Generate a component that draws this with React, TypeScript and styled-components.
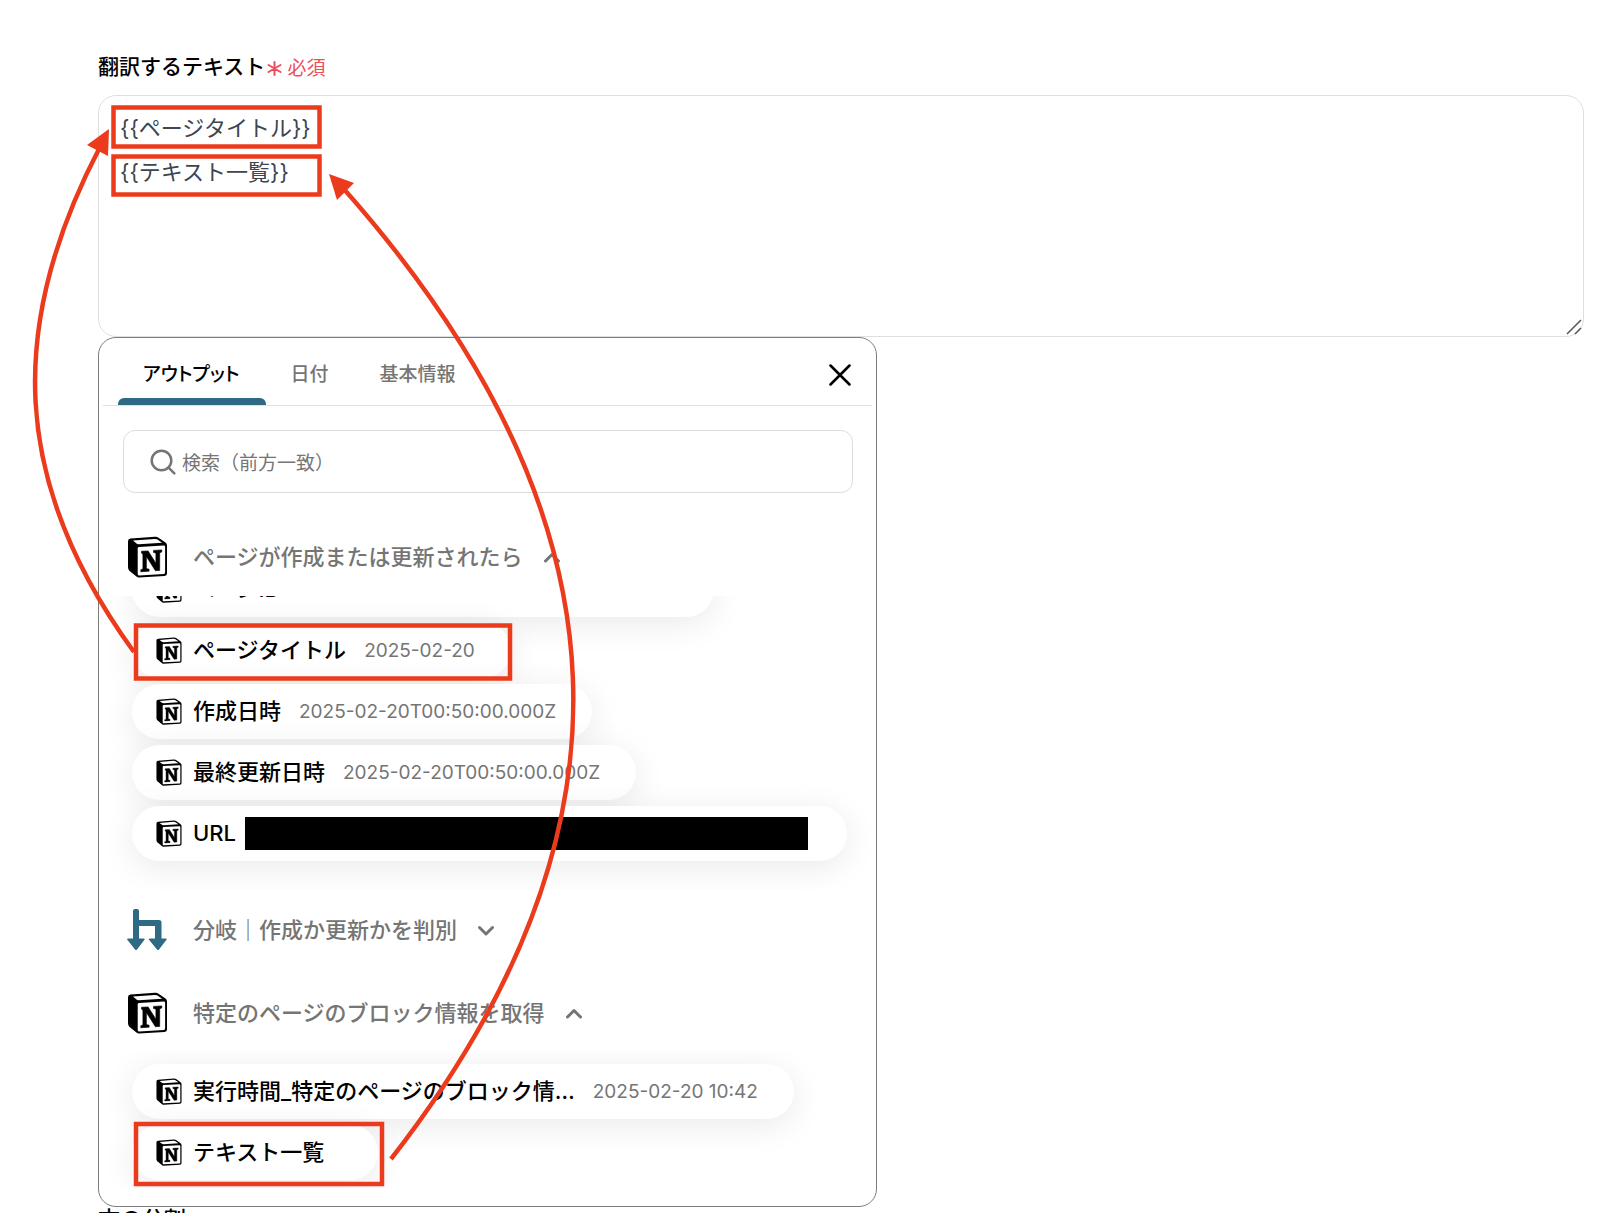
import React, { useState } from 'react';
import styled, { createGlobalStyle } from 'styled-components';

const Global = createGlobalStyle`
  *, *::before, *::after { box-sizing: border-box; }
  html { overflow: hidden; }
  body {
    margin: 0;
    background: #fff;
    color: #000;
    font-family: Inter, "Noto Sans CJK JP", sans-serif;
  }
  button, input, textarea { font: inherit; color: inherit; }
`;

const RED = '#eb3b1c';
const TEAL = '#2e6a84';

const Page = styled.main`
  position: relative;
  padding: 52px 16px 0 98px;
  height: 100vh;
  overflow: hidden;
`;

const FieldLabel = styled.label`
  display: flex;
  align-items: center;
  gap: 2px;
  height: 30px;
  font-size: 21px;
  line-height: 30px;
  font-weight: 500;
`;

const Required = styled.span`
  display: flex;
  align-items: center;
  gap: 5px;
  padding-top: 3px;
  color: #ee4d5a;
  font-size: 19px;
  font-weight: 400;
`;

const EditorWrap = styled.div`
  position: relative;
  margin-top: 13px;
`;

const Editor = styled.textarea`
  display: block;
  width: 100%;
  height: 242px;
  padding: 10px 21px;
  border: 1px solid #dcdfe4;
  border-radius: 18px;
  outline: none;
  resize: none;
  background: #fff;
  color: #3d454f;
  font-size: 22px;
  line-height: 44px;
`;

const Grip = styled.svg`
  position: absolute;
  right: 2px;
  bottom: 2px;
`;

const Panel = styled.section`
  width: 52.4%;
  height: 870px;
  padding: 0 4px;
  border: 1px solid #7c7c7c;
  border-radius: 18px;
  background: #fff;
`;

const TabBar = styled.div`
  display: flex;
  align-items: stretch;
  height: 68px;
  padding: 0 21px 0 15px;
  border-bottom: 1px solid #e0e0e0;
`;

const TabItem = styled.div<{ $active: boolean }>`
  display: flex;
  flex-direction: column;
  &::after {
    content: "";
    height: 7px;
    border-radius: 6px 6px 0 0;
    background: ${(p) => (p.$active ? TEAL : 'transparent')};
  }
`;

const Tab = styled.button<{ $active: boolean }>`
  flex: 1;
  padding: 8px 26px 0 25px;
  border: 0;
  background: none;
  color: ${(p) => (p.$active ? '#000' : '#757575')};
  font-size: 19px;
  font-weight: 500;
  font-feature-settings: "palt";
`;

const CloseButton = styled.button`
  display: flex;
  align-items: center;
  margin-left: auto;
  padding: 6px 0 0;
  border: 0;
  background: none;
`;

const SearchBox = styled.label`
  display: flex;
  align-items: center;
  gap: 6px;
  height: 63px;
  margin: 24px 19px 0 20px;
  padding: 0 26px;
  border: 1px solid #dcdcdc;
  border-radius: 12px;
  color: #757575;
`;

const SearchInput = styled.input`
  flex: 1;
  min-width: 0;
  padding: 4px 0 0;
  border: 0;
  outline: none;
  background: none;
  font-size: 19px;
  &::placeholder { color: #757575; opacity: 1; }
`;

const Group = styled.div<{ $top: number }>`
  padding-top: ${(p) => p.$top}px;
`;

const GroupHeader = styled.button`
  display: flex;
  align-items: center;
  height: 78px;
  padding: 0 24px;
  border: 0;
  background: none;
  color: #757575;
  font-size: 22px;
  font-weight: 500;
  line-height: 32px;
`;

const GroupTitle = styled.span`
  margin: 0 20px 0 25px;
`;

const PillList = styled.ul<{ $height: number; $end?: boolean }>`
  display: flex;
  flex-direction: column;
  align-items: flex-start;
  justify-content: ${(p) => (p.$end ? 'flex-end' : 'flex-start')};
  gap: 6px;
  height: ${(p) => p.$height}px;
  margin: 0;
  padding: ${(p) => (p.$end ? '0 29px 29px' : '12px 29px 0')};
  overflow: hidden;
  list-style: none;
`;

const PillItem = styled.li`
  flex: none;
  display: flex;
`;

const Pill = styled.button`
  display: flex;
  align-items: center;
  height: 55px;
  padding: 0 36px 0 24px;
  border: 0;
  border-radius: 28px;
  background: #fff;
  box-shadow: 0 6px 34px rgba(0, 0, 0, 0.09);
`;

const PillLabel = styled.span`
  margin-left: 11px;
  padding-bottom: 2px;
  font-size: 22px;
  line-height: 32px;
  font-weight: 500;
  white-space: nowrap;
`;

const PillValue = styled.span`
  margin-left: 18px;
  color: #757575;
  font-size: 19px;
  white-space: nowrap;
`;

const Redaction = styled.span`
  width: 563px;
  height: 33px;
  margin: 0 3px 0 9px;
  background: #000;
`;

const NextLabel = styled.div`
  font-size: 22px;
  line-height: 24px;
  font-weight: 500;
`;

const Overlay = styled.svg`
  position: absolute;
  left: 0;
  top: 0;
  pointer-events: none;
`;

function NotionIcon({ size }: { size: number }) {
  return (
    <svg width={size} height={size + 1} viewBox="0 0 40 42" aria-hidden="true">
      <path d="M3 2.6 27.5.8Q29.5.6 31 1.7L38 6.6Q39.5 7.7 39.5 9.5V37.5Q39.5 39.8 37 40L11.5 41.5Q9.5 41.6 8.3 40.1L1.8 34.7Q.5 33 .5 31V5.2Q.5 2.8 3 2.6Z" fill="#000" />
      <path d="M5.5 4.5 27.5 2.9Q28.8 2.8 30 3.6L34.6 6.8 11.5 8.2Q10 8.3 9 7.5Z" fill="#fff" />
      <path d="M11.6 11 36 9.6Q37.6 9.5 37.6 10.7V36.6Q37.6 37.9 36.4 38L11.6 39.4Q10.2 39.5 10.2 38.1V12.3Q10.2 11.1 11.6 11Z" fill="#fff" />
      <path d="M14 15.3 20.6 14.9 28.4 27.2V17.1L26 16.4V14.4L34.3 13.9V15.9L32.2 16.8V34.4L27.9 34.7 18.9 20.6V32.5L21.6 33.2V35.2L13.3 35.7V33.7L15.4 32.9V17.9L14 17.2Z" fill="#000" stroke="#000" strokeWidth=".6" />
    </svg>
  );
}

function BranchIcon() {
  return (
    <svg width="41" height="42" viewBox="0 0 41 42" fill={TEAL} aria-hidden="true">
      <path d="M6 2Q6 0 8 0H10Q12 0 12 2V11H32Q34.5 11 34.5 13.5V29.5H38.5Q40.5 29.5 39.3 31L32 40.5Q31 41.5 30 40.5L22.2 31Q21 29.5 23 29.5H28V17H12V29.5H16.5Q18.5 29.5 17.3 31L10 40.5Q9 41.5 8 40.5L.5 31Q-.7 29.5 1.5 29.5H6Z" />
    </svg>
  );
}

function Chevron({ up }: { up?: boolean }) {
  return (
    <svg width="18" height="12" viewBox="0 0 18 12" fill="none" stroke="#757575" strokeWidth="3" strokeLinecap="round" strokeLinejoin="round" aria-hidden="true">
      <path d={up ? 'M2.5 10 9 3.5 15.5 10' : 'M2.5 3.5 9 10 15.5 3.5'} />
    </svg>
  );
}

function OutputPill({ label, value, redacted }: { label: string; value?: string; redacted?: boolean }) {
  return (
    <PillItem>
      <Pill type="button">
        <NotionIcon size={26} />
        <PillLabel>{label}</PillLabel>
        {redacted ? <Redaction /> : <PillValue>{value}</PillValue>}
      </Pill>
    </PillItem>
  );
}

const tabs = ['アウトプット', '日付', '基本情報'];

export default function App() {
  const [active, setActive] = useState(0);
  return (
    <>
      <Global />
      <Page>
        <FieldLabel htmlFor="source">
          翻訳するテキスト
          <Required>
            <svg width="15" height="15" viewBox="0 0 15 15" stroke="#ee4d5a" strokeWidth="2" strokeLinecap="round" aria-hidden="true">
              <path d="M7.5 1V14M1.5 4 13.5 11M13.5 4 1.5 11" />
            </svg>
            必須
          </Required>
        </FieldLabel>
        <EditorWrap>
          <Editor id="source" spellCheck={false} defaultValue={'{{ページタイトル}}\n{{テキスト一覧}}'} />
          <Grip width="16" height="16" viewBox="0 0 16 16" stroke="#555" strokeWidth="1.5" aria-hidden="true">
            <path d="M1 15 15 1M9 15 15 9" />
          </Grip>
        </EditorWrap>
        <Panel>
          <TabBar role="tablist">
            {tabs.map((name, i) => (
              <TabItem key={name} $active={i === active} role="presentation">
                <Tab type="button" role="tab" aria-selected={i === active} $active={i === active} onClick={() => setActive(i)}>
                  {name}
                </Tab>
              </TabItem>
            ))}
            <CloseButton type="button" aria-label="閉じる">
              <svg width="22" height="22" viewBox="0 0 22 22" stroke="#000" strokeWidth="2.5" strokeLinecap="round" aria-hidden="true">
                <path d="M1.5 1.5 20.5 20.5M20.5 1.5 1.5 20.5" />
              </svg>
            </CloseButton>
          </TabBar>
          <SearchBox>
            <svg width="26" height="26" viewBox="0 0 26 26" fill="none" stroke="#757575" strokeWidth="2.5" strokeLinecap="round" aria-hidden="true">
              <circle cx="11.5" cy="11.5" r="9.8" />
              <path d="M18.8 18.8 24.3 24.3" />
            </svg>
            <SearchInput type="text" aria-label="検索" placeholder="検索（前方一致）" />
          </SearchBox>
          <Group $top={25}>
            <GroupHeader type="button" aria-expanded="true">
              <NotionIcon size={41} />
              <GroupTitle>ページが作成または更新されたら</GroupTitle>
              <Chevron up />
            </GroupHeader>
            <PillList $height={294} $end>
              <OutputPill label="ページID" value="00000000-0000-0000-0000-0000000-0" />
              <OutputPill label="ページタイトル" value="2025-02-20" />
              <OutputPill label="作成日時" value="2025-02-20T00:50:00.000Z" />
              <OutputPill label="最終更新日時" value="2025-02-20T00:50:00.000Z" />
              <OutputPill label="URL" redacted />
            </PillList>
          </Group>
          <Group $top={1}>
            <GroupHeader type="button" aria-expanded="false">
              <BranchIcon />
              <GroupTitle>分岐｜作成か更新かを判別</GroupTitle>
              <Chevron />
            </GroupHeader>
          </Group>
          <Group $top={5}>
            <GroupHeader type="button" aria-expanded="true">
              <NotionIcon size={41} />
              <GroupTitle>特定のページのブロック情報を取得</GroupTitle>
              <Chevron up />
            </GroupHeader>
            <PillList $height={136}>
              <OutputPill label="実行時間_特定のページのブロック情…" value="2025-02-20 10:42" />
              <OutputPill label="テキスト一覧" />
            </PillList>
          </Group>
        </Panel>
        <NextLabel>文の分割</NextLabel>
        <Overlay width="620" height="1213" viewBox="0 0 620 1213" fill="none" stroke={RED} strokeWidth="4.5" aria-hidden="true">
          <rect x="113.5" y="107.5" width="206" height="39" />
          <rect x="113.5" y="156.5" width="206" height="38" />
          <rect x="136" y="625.5" width="374" height="53" />
          <rect x="136" y="1124" width="246" height="60" />
          <path d="M134 652C10 482 7 325 100 147" />
          <path d="M109 129 87 145 108 156Z" fill={RED} stroke="none" />
          <path d="M391 1159C643 836 640 523 343 188" />
          <path d="M329 174 354 183 337 200Z" fill={RED} stroke="none" />
        </Overlay>
      </Page>
    </>
  );
}
